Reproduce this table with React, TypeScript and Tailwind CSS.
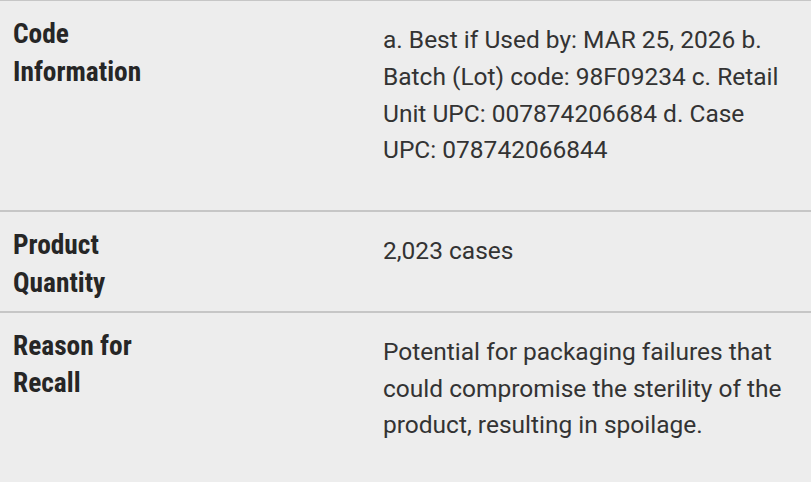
const rows = [
  {
    label: 'Code Information',
    value:
      'a. Best if Used by: MAR 25, 2026 b. Batch (Lot) code: 98F09234 c. Retail Unit UPC: 007874206684 d. Case UPC: 078742066844',
  },
  { label: 'Product Quantity', value: '2,023 cases' },
  {
    label: 'Reason for Recall',
    value:
      'Potential for packaging failures that could compromise the sterility of the product, resulting in spoilage.',
  },
];

export default function App() {
  return (
    <div className="min-h-screen w-[811px] overflow-hidden bg-[#ededed] font-['Roboto',sans-serif] text-[24.5px]">
      <div className="border-t border-[#c6c6c6]">
        {rows.map((row, i) => (
          <div
            key={row.label}
            className={
              i < rows.length - 1
                ? 'grid grid-cols-[383px_1fr] border-b-2 border-[#c6c6c6]'
                : 'grid grid-cols-[383px_1fr]'
            }
          >
            <div className="pl-[13px] pt-[15px] pb-[6px]">
              <div className="max-w-[160px] text-[27.4px] font-bold font-stretch-condensed leading-[37.5px] text-[#262626]">
                {row.label}
              </div>
            </div>
            <div className="pr-[13px] pt-[21px] pb-[41px] leading-[36.75px] text-[#333333]">
              {row.value}
            </div>
          </div>
        ))}
      </div>
    </div>
  );
}
